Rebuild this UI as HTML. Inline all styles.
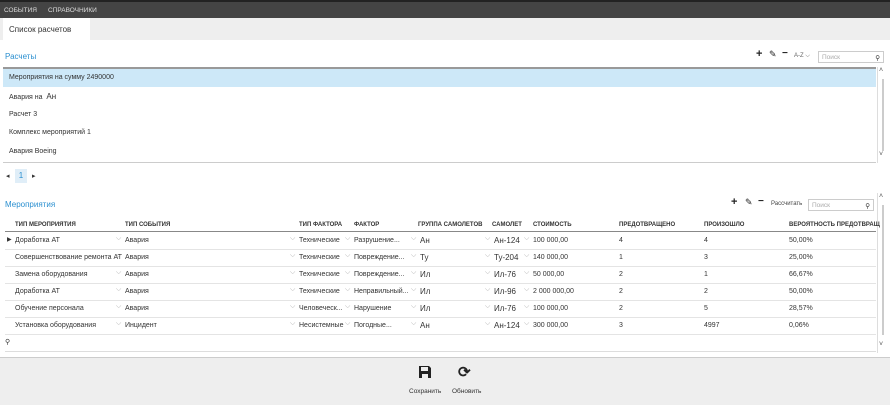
<!DOCTYPE html><html><head><meta charset="utf-8"><style>
body{margin:0;width:890px;height:404px;position:relative;overflow:hidden;background:#fff;font-family:"Liberation Sans",sans-serif;font-size:7px;color:#333}
.a{position:absolute;white-space:nowrap}
.top{left:0;top:0;width:890px;height:18px;background:#444;border-top:2px solid #222;box-sizing:border-box;color:#ddd;font-size:6.5px}
.tabs{left:0;top:18px;width:890px;height:22px;background:#eee}
.tab{left:3px;top:18px;width:87px;height:22px;background:#fff;font-size:8px;color:#333}
.blue{color:#2a8fd0;font-size:8px}
.list{left:3px;top:67px;width:873px;height:96px;border-top:2px solid #999;border-bottom:1px solid #ccc;box-sizing:border-box}
.sb{background:#fff;border-left:1px solid #ddd}
.th{font-size:6px;font-weight:bold;color:#333}
.row{left:5px;width:871px;height:17px;border-bottom:1px solid #e4e4e4}
.ch{color:#aaa;font-size:7px}
.search{border:1px solid #ccc;height:12px;width:66px;color:#aaa;font-size:6.5px;box-sizing:border-box;padding:2px 3px}
.bot{left:0;top:357px;width:890px;height:47px;background:#eee;border-top:1px solid #ccc}
</style></head><body>
<div class="a top"><span class="a" style="left:4px;top:5px">СОБЫТИЯ</span><span class="a" style="left:48px;top:5px">СПРАВОЧНИКИ</span></div>
<div class="a tabs"></div>
<div class="a tab"><span class="a" style="left:6px;top:7px">Список расчетов</span></div>
<div class="a blue" style="left:5px;top:52px">Расчеты</div>
<div class="a" style="left:756px;top:48px;font-size:11px;font-weight:bold;color:#222">+</div>
<div class="a" style="left:769px;top:49px;font-size:9px;color:#222">✎</div>
<div class="a" style="left:782px;top:48px;font-size:10px;font-weight:bold;color:#222">−</div>
<div class="a" style="left:794px;top:53px;font-size:6px;color:#666">A-Z ⌵</div>
<div class="a search" style="left:818px;top:51px">Поиск<span style="float:right;color:#333">⚲</span></div>
<div class="a list">
<div class="a" style="left:0;top:0;width:873px;height:18px;background:#cde8f8"></div>
<span class="a" style="left:6px;top:5px">Мероприятия на сумму 2490000</span>
<span class="a" style="left:6px;top:23px">Авария на &nbsp;<span style="font-size:8px">Ан</span></span>
<span class="a" style="left:6px;top:42px">Расчет 3</span>
<span class="a" style="left:6px;top:60px">Комплекс мероприятий 1</span>
<span class="a" style="left:6px;top:79px">Авария Boeing</span>
</div>
<div class="a sb" style="left:877px;top:67px;width:10px;height:96px"><span class="a" style="left:1px;top:0;color:#555">˄</span><div class="a" style="left:4px;top:12px;width:2px;height:72px;background:#ccc"></div><span class="a" style="left:1px;top:84px;color:#555">˅</span></div>
<div class="a" style="left:6px;top:172px;font-size:7px;color:#333">◂</div>
<div class="a" style="left:15px;top:169px;width:12px;height:14px;background:#e0eef8;color:#2a8fd0;font-size:8px;text-align:center;line-height:14px">1</div>
<div class="a" style="left:32px;top:172px;font-size:7px;color:#333">▸</div>
<div class="a blue" style="left:5px;top:200px">Мероприятия</div>
<div class="a" style="left:731px;top:196px;font-size:11px;font-weight:bold;color:#222">+</div>
<div class="a" style="left:745px;top:197px;font-size:9px;color:#222">✎</div>
<div class="a" style="left:758px;top:196px;font-size:10px;font-weight:bold;color:#222">−</div>
<div class="a" style="left:771px;top:201px;font-size:6px;color:#444">Рассчитать</div>
<div class="a search" style="left:808px;top:199px">Поиск<span style="float:right;color:#333">⚲</span></div>
<div class="a sb" style="left:877px;top:193px;width:10px;height:160px"><span class="a" style="left:1px;top:0;color:#555">˄</span><div class="a" style="left:4px;top:12px;width:2px;height:130px;background:#ccc"></div><span class="a" style="left:1px;top:148px;color:#555">˅</span></div>
<div class="a th" style="left:15px;top:222px">ТИП МЕРОПРИЯТИЯ</div>
<div class="a th" style="left:125px;top:222px">ТИП СОБЫТИЯ</div>
<div class="a th" style="left:299px;top:222px">ТИП ФАКТОРА</div>
<div class="a th" style="left:354px;top:222px">ФАКТОР</div>
<div class="a th" style="left:418px;top:222px">ГРУППА САМОЛЕТОВ</div>
<div class="a th" style="left:492px;top:222px">САМОЛЕТ</div>
<div class="a th" style="left:533px;top:222px">СТОИМОСТЬ</div>
<div class="a th" style="left:619px;top:222px">ПРЕДОТВРАЩЕНО</div>
<div class="a th" style="left:704px;top:222px">ПРОИЗОШЛО</div>
<div class="a th" style="left:789px;top:222px">ВЕРОЯТНОСТЬ ПРЕДОТВРАЩ</div>
<div class="a" style="left:5px;top:231px;width:871px;height:1px;background:#888"></div>
<div class="a row" style="top:232px"></div><div class="a row" style="top:249px"></div><div class="a row" style="top:266px"></div><div class="a row" style="top:283px"></div><div class="a row" style="top:300px"></div><div class="a row" style="top:317px"></div>
<div class="a" style="left:7px;top:236px;font-size:6px">▶</div>
<div id="rows"></div>
<div class="a" style="left:5px;top:338px;font-size:7px">⚲</div>
<div class="a" style="left:5px;top:351px;width:871px;height:1px;background:#ddd"></div>
<div class="a bot"></div>
<svg class="a" style="left:418px;top:365px" width="14" height="14" viewBox="0 0 14 14"><path d="M1 1h10l2 2v10H1z" fill="#222"/><rect x="3" y="2" width="7" height="4" fill="#eee"/><rect x="4" y="9" width="6" height="4" fill="#eee"/></svg>
<div class="a" style="left:409px;top:388px;font-size:6.5px">Сохранить</div>
<div class="a" style="left:458px;top:363px;font-size:15px;font-weight:bold;color:#222">⟳</div>
<div class="a" style="left:452px;top:388px;font-size:6.5px">Обновить</div>
<script>
var d=[["Доработка АТ","Авария","Технические","Разрушение...","Ан","Ан-124","100 000,00","4","4","50,00%"],
["Совершенствование ремонта АТ","Авария","Технические","Повреждение...","Ту","Ту-204","140 000,00","1","3","25,00%"],
["Замена оборудования","Авария","Технические","Повреждение...","Ил","Ил-76","50 000,00","2","1","66,67%"],
["Доработка АТ","Авария","Технические","Неправильный...","Ил","Ил-96","2 000 000,00","2","2","50,00%"],
["Обучение персонала","Авария","Человеческ...","Нарушение","Ил","Ил-76","100 000,00","2","5","28,57%"],
["Установка оборудования","Инцидент","Несистемные","Погодные...","Ан","Ан-124","300 000,00","3","4997","0,06%"]];
var x=[15,125,299,354,420,494,533,619,704,789],ar=[116,116,290,344,409,484,524],h="";
d.forEach(function(r,i){var t=237+i*17;r.forEach(function(c,j){var fs=(j==4||j==5)?8:7;h+='<div class="a" style="left:'+x[j]+'px;top:'+(t-(fs-7))+'px;font-size:'+fs+'px">'+c+'</div>';});
ar.forEach(function(a,k){if(k==0)return;h+='<div class="a ch" style="left:'+(x[k]-9)+'px;top:'+(t-2)+'px">⌵</div>';});});
document.getElementById('rows').innerHTML=h;
</script>
</body></html>
